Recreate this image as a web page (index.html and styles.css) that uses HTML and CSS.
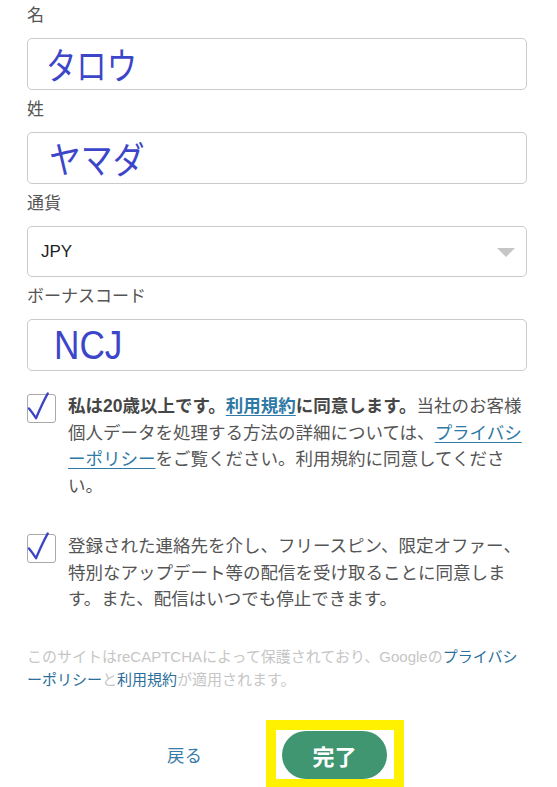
FILE: index.html
```html
<!DOCTYPE html>
<html lang="ja">
<head>
<meta charset="utf-8">
<title>登録</title>
<link rel="stylesheet" href="styles.css">
</head>
<body>
<main class="page">
  <div class="field">
    <div class="label">名</div>
    <div class="control"><span class="entry entry-kana entry-first">タロウ</span></div>
  </div>
  <div class="field">
    <div class="label">姓</div>
    <div class="control"><span class="entry entry-kana entry-last">ヤマダ</span></div>
  </div>
  <div class="field">
    <div class="label">通貨</div>
    <div class="control control-select"><span class="select-value">JPY</span><span class="caret"></span></div>
  </div>
  <div class="field">
    <div class="label">ボーナスコード</div>
    <div class="control"><span class="entry entry-code">NCJ</span></div>
  </div>

  <div class="consent consent-first">
    <span class="box"><svg class="tick" width="27" height="27" viewBox="0 0 27 27"><path d="M1 13.5 C3.5 16.5 6 20 8 23.2 C11.5 15 15 7 19.8 -1.6" fill="none" stroke="#3c44c6" stroke-width="2.3" stroke-linecap="round" stroke-linejoin="round"/></svg></span>
    <p class="consent-text"><strong>私は20歳以上です。<a class="link" href="#">利用規約</a>に同意します。</strong>当社のお客様<br>個人データを処理する方法の詳細については、<a class="link" href="#">プライバシ<br>ーポリシー</a>をご覧ください。利用規約に同意してくださ<br>い。</p>
  </div>
  <div class="consent consent-second">
    <span class="box"><svg class="tick" width="27" height="27" viewBox="0 0 27 27"><path d="M1 13.5 C3.5 16.5 6 20 8 23.2 C11.5 15 15 7 19.8 -1.6" fill="none" stroke="#3c44c6" stroke-width="2.3" stroke-linecap="round" stroke-linejoin="round"/></svg></span>
    <p class="consent-text">登録された連絡先を介し、フリースピン、限定オファー、<br>特別なアップデート等の配信を受け取ることに同意しま<br>す。また、配信はいつでも停止できます。</p>
  </div>

  <p class="recaptcha">このサイトはreCAPTCHAによって保護されており、Googleの<a class="rc-link" href="#">プライバシ<br>ーポリシー</a>と<a class="rc-link" href="#">利用規約</a>が適用されます。</p>

  <div class="actions">
    <a class="back" href="#">戻る</a>
    <div class="frame"><button class="done" type="button">完了</button></div>
  </div>
</main>
</body>
</html>
```
FILE: styles.css
```css
html, body {
  margin: 0;
  padding: 0;
  background: #ffffff;
  overflow: hidden;
}

body {
  font-family: "Liberation Sans", "Noto Sans CJK JP", sans-serif;
  color: #555555;
}

.page {
  width: 500px;
  padding: 1px 30px 0 27px;
}

.label {
  font-size: 17px;
  line-height: 30px;
  color: #555555;
  margin-bottom: 7px;
}

.control {
  box-sizing: border-box;
  height: 52px;
  border: 1px solid #cacaca;
  border-radius: 5px;
  display: flex;
  align-items: center;
  margin-bottom: 5px;
  background: #fff;
}

.entry {
  display: inline-block;
  color: #3d46c8;
  line-height: 1;
  transform-origin: left center;
}

.entry-kana {
  font-family: "Noto Sans CJK JP", sans-serif;
  font-size: 37px;
}

.entry-first {
  margin-left: 18px;
  transform: scaleX(0.82);
}

.entry-last {
  margin-left: 21px;
  transform: scaleX(0.86);
}

.entry-code {
  font-family: "Liberation Sans", sans-serif;
  font-size: 40px;
  margin-left: 26px;
  transform: scaleX(0.88);
}

.control-select {
  height: 51px;
  justify-content: space-between;
  padding: 0 11px 0 13px;
}

.select-value {
  font-size: 17px;
  color: #1e1e1e;
}

.caret {
  width: 0;
  height: 0;
  border-left: 9px solid transparent;
  border-right: 9px solid transparent;
  border-top: 9px solid #c6c6c6;
  margin-top: 1px;
}

.consent {
  display: flex;
  align-items: flex-start;
  gap: 12px;
}

.consent-first {
  margin-top: 22px;
}

.consent-second {
  margin-top: 33px;
}

.box {
  flex: none;
  box-sizing: border-box;
  width: 29px;
  height: 29px;
  border: 1px solid #a9a9a9;
  border-radius: 3px;
  margin-top: 1px;
  background: #fff;
}

.tick {
  display: block;
  overflow: visible;
}

.consent-text {
  margin: 0;
  font-size: 17.5px;
  line-height: 26.7px;
  color: #555555;
  white-space: nowrap;
}

.consent-text strong {
  color: #464646;
  font-weight: 700;
}

.link {
  color: #2f79a5;
  text-decoration: underline;
  text-underline-offset: 3px;
}

.recaptcha {
  margin: 32px 0 0;
  font-size: 15px;
  line-height: 23px;
  color: #c6c6c6;
  white-space: nowrap;
}

.rc-link {
  color: #2b6e9a;
  text-decoration: none;
}

.actions {
  margin-top: 29px;
  display: flex;
  align-items: center;
  padding-left: 140px;
  gap: 64px;
}

.back {
  font-size: 17.5px;
  color: #3a7ca6;
  text-decoration: none;
}

.frame {
  border: 10px solid #fff100;
  padding: 1px 7px 0 6px;
  background: #fff;
}

.done {
  display: block;
  width: 105px;
  height: 48px;
  border: none;
  border-radius: 24px;
  background: #3f9671;
  color: #ffffff;
  font-family: "Noto Sans CJK JP", sans-serif;
  font-size: 22px;
  font-weight: 700;
  padding: 0;
}
```
